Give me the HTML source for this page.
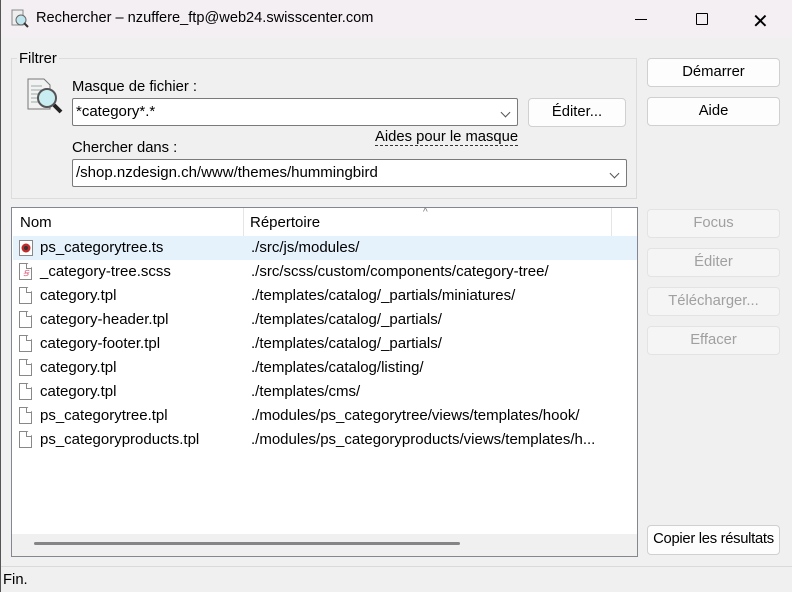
<!DOCTYPE html>
<html><head><meta charset="utf-8"><style>
*{box-sizing:border-box;margin:0;padding:0}
body{width:792px;height:592px;overflow:hidden;background:#f0f0f0;font-family:"Liberation Sans",sans-serif;font-size:14.8px;color:#000;position:relative}
.a{position:absolute}
.btn{position:absolute;background:#fdfdfd;border:1px solid #d0d0d0;border-radius:4px;text-align:center;line-height:26px;font-size:14.8px}
.dis{background:#f5f5f5;color:#a0a0a0;border-color:#e3e3e3}
.combo{position:absolute;background:#fff;border:1px solid #7a7a7a;border-radius:2px;padding-left:3px;line-height:26px}
.chev{position:absolute;right:8px;top:10px;width:7px;height:7px;border-right:1px solid #555;border-bottom:1px solid #555;transform:rotate(45deg)}
.row{position:absolute;left:1px;width:624px;height:24px;line-height:24px;font-size:15px}
.row .n{position:absolute;left:27px}
.row .d{position:absolute;left:238px;white-space:nowrap}
.fi{position:absolute;left:6px;top:3px;width:13px;height:17px;border:1px solid #888;background:#fff;clip-path:polygon(0 0,65% 0,100% 28%,100% 100%,0 100%)}
.fi:after{content:"";position:absolute;right:-1px;top:-1px;width:5px;height:5px;border-left:1px solid #888;border-bottom:1px solid #888}
</style></head><body>
<div class="a" style="left:0;top:0;width:792px;height:38px;background:#f4eff3"></div>
<div class="a" style="left:0;top:0;width:1px;height:592px;background:#555"></div>
<svg class="a" style="left:10px;top:9px" width="20" height="20"><rect x="2" y="1" width="11" height="15" fill="#eee" stroke="#888"/><circle cx="11" cy="11" r="5" fill="#bfe6ee" stroke="#666"/><line x1="14" y1="14" x2="18" y2="18" stroke="#333" stroke-width="2"/></svg>
<div class="a" style="left:36px;top:10px;font-size:14.6px">Rechercher – nzuffere_ftp@web24.swisscenter.com</div>
<div class="a" style="left:635px;top:19px;width:12px;height:1px;background:#000"></div>
<div class="a" style="left:696px;top:13px;width:12px;height:12px;border:1px solid #000;border-radius:1px"></div>
<div class="a" style="left:752px;top:9px;font-size:20px;font-weight:300">✕</div>

<div class="a" style="left:11px;top:58px;width:626px;height:141px;border:1px solid #dcdcdc"></div>
<div class="a" style="left:17px;top:51px;background:#f0f0f0;padding:0 2px">Filtrer</div>
<svg class="a" style="left:26px;top:78px" width="42" height="42"><path d="M2 1h16l6 6v24H2z" fill="#f2f2f2" stroke="#777"/><g stroke="#9aa" ><line x1="5" y1="8" x2="16" y2="8"/><line x1="5" y1="12" x2="18" y2="12"/><line x1="5" y1="16" x2="14" y2="16"/><line x1="5" y1="20" x2="14" y2="20"/><line x1="5" y1="24" x2="14" y2="24"/></g><circle cx="21" cy="20" r="9" fill="#c8eef2" stroke="#555" stroke-width="2"/><line x1="28" y1="27" x2="35" y2="34" stroke="#222" stroke-width="4"/></svg>
<div class="a" style="left:72px;top:79px">Masque de fichier :</div>
<div class="combo" style="left:72px;top:98px;width:446px;height:28px;font-size:15px">*category*.*<div class="chev"></div></div>
<div class="btn" style="left:528px;top:98px;width:98px;height:29px">Éditer...</div>
<div class="a" style="left:375px;top:129px;border-bottom:1px dashed #333;line-height:16px">Aides pour le masque</div>
<div class="a" style="left:72px;top:140px">Chercher dans :</div>
<div class="combo" style="left:72px;top:159px;width:555px;height:28px;font-size:15px">/shop.nzdesign.ch/www/themes/hummingbird<div class="chev"></div></div>

<div class="btn" style="left:647px;top:58px;width:133px;height:29px">Démarrer</div>
<div class="btn" style="left:647px;top:97px;width:133px;height:29px">Aide</div>

<div class="a" style="left:11px;top:207px;width:627px;height:350px;border:1px solid #828790;background:#fff">
 <div class="a" style="left:0;top:0;width:625px;height:28px;line-height:30px;font-size:15px">
  <span class="a" style="left:8px">Nom</span>
  <div class="a" style="left:231px;top:0;width:1px;height:28px;background:#e5e5e5"></div>
  <span class="a" style="left:238px">Répertoire</span>
  <div class="a" style="left:599px;top:0;width:1px;height:28px;background:#e5e5e5"></div>
  <div class="a" style="left:411px;top:0px;font-size:10px;color:#777;line-height:10px">^</div>
 </div>
 <div class="row" style="top:28px;background:#e5f1fb"><svg class="a" style="left:6px;top:4px" width="14" height="16"><rect x=".5" y=".5" width="13" height="15" fill="#fff" stroke="#888"/><circle cx="7" cy="8" r="4.5" fill="#c12a2a"/><circle cx="7" cy="8" r="2" fill="#333"/></svg><span class="n">ps_categorytree.ts</span><span class="d">./src/js/modules/</span></div>
 <div class="row" style="top:52px"><div class="fi"></div><span class="a" style="left:10px;top:1px;color:#e0708a;font-size:11px;font-style:italic">ꞩ</span><span class="n">_category-tree.scss</span><span class="d">./src/scss/custom/components/category-tree/</span></div>
 <div class="row" style="top:76px"><div class="fi"></div><span class="n">category.tpl</span><span class="d">./templates/catalog/_partials/miniatures/</span></div>
 <div class="row" style="top:100px"><div class="fi"></div><span class="n">category-header.tpl</span><span class="d">./templates/catalog/_partials/</span></div>
 <div class="row" style="top:124px"><div class="fi"></div><span class="n">category-footer.tpl</span><span class="d">./templates/catalog/_partials/</span></div>
 <div class="row" style="top:148px"><div class="fi"></div><span class="n">category.tpl</span><span class="d">./templates/catalog/listing/</span></div>
 <div class="row" style="top:172px"><div class="fi"></div><span class="n">category.tpl</span><span class="d">./templates/cms/</span></div>
 <div class="row" style="top:196px"><div class="fi"></div><span class="n">ps_categorytree.tpl</span><span class="d">./modules/ps_categorytree/views/templates/hook/</span></div>
 <div class="row" style="top:220px"><div class="fi"></div><span class="n">ps_categoryproducts.tpl</span><span class="d">./modules/ps_categoryproducts/views/templates/h...</span></div>
 <div class="a" style="left:0;top:326px;width:625px;height:22px;background:#f0f0f0"></div>
 <div class="a" style="left:22px;top:334px;width:426px;height:3px;border-radius:2px;background:#858585"></div>
</div>

<div class="btn dis" style="left:647px;top:209px;width:133px;height:29px">Focus</div>
<div class="btn dis" style="left:647px;top:248px;width:133px;height:29px">Éditer</div>
<div class="btn dis" style="left:647px;top:287px;width:133px;height:29px">Télécharger...</div>
<div class="btn dis" style="left:647px;top:326px;width:133px;height:29px">Effacer</div>
<div class="btn" style="left:647px;top:525px;width:133px;height:30px;letter-spacing:-0.3px">Copier les résultats</div>

<div class="a" style="left:1px;top:566px;width:791px;height:1px;background:#dadada"></div>
<div class="a" style="left:3px;top:572px">Fin.</div>
</body></html>
